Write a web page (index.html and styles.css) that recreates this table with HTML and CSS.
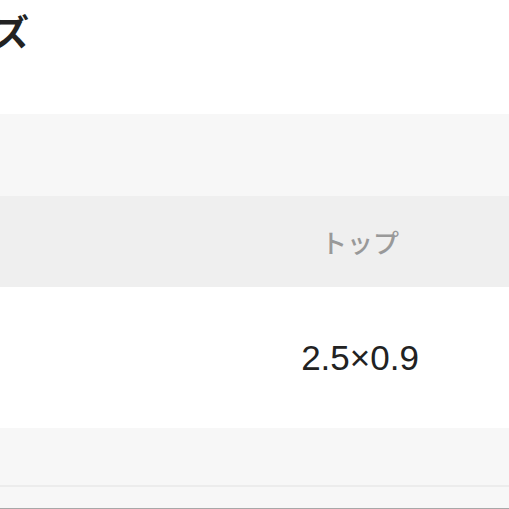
FILE: index.html
```html
<!DOCTYPE html>
<html lang="ja">
<head>
    <meta charset="UTF-8">
    <title>サイズ</title>
    <link rel="stylesheet" href="styles.css">
</head>
<body>
    <div class="page">
        <h2 class="title">サイズ</h2>
        <div class="size-table">
            <div class="tab-bar"></div>
            <div class="row head">
                <div class="cell"></div>
                <div class="cell">トップ</div>
                <div class="cell"></div>
            </div>
            <div class="row data">
                <div class="cell"></div>
                <div class="cell">2.5×0.9</div>
                <div class="cell"></div>
            </div>
            <div class="row note"></div>
            <div class="row note last"></div>
        </div>
    </div>
</body>
</html>
```

FILE: styles.css
```css
body {
    margin: 0;
    background-color: #FFF;
    color: #222;
    font-family: 'Liberation Sans', 'Noto Sans CJK JP', sans-serif;
}
.page {
    width: 100%;
    overflow: hidden;
}
.title {
    font-family: 'Noto Sans CJK JP', sans-serif;
    font-size: 36px;
    font-weight: 700;
    line-height: 52px;
    margin: 4px 0 58px -78px;
    white-space: nowrap;
}
.size-table {
    display: flex;
    flex-direction: column;
}
.tab-bar {
    height: 82px;
    background-color: #F7F7F7;
}
.row {
    display: grid;
    grid-template-columns: 260px 200px 1fr;
}
.cell {
    display: flex;
    justify-content: center;
    align-items: center;
}
.row.head {
    height: 91px;
    background-color: #EFEFEF;
    color: #999;
    font-family: 'Noto Sans CJK JP', sans-serif;
    font-size: 26px;
    font-weight: 500;
}
.row.data {
    height: 141px;
    font-size: 35px;
}
.row.note {
    height: 57px;
    background-color: #F7F7F7;
    border-bottom: 2px solid #ECECEC;
}
.row.note.last {
    height: 21px;
    border-bottom: 1px solid #A8A8A8;
}
```
